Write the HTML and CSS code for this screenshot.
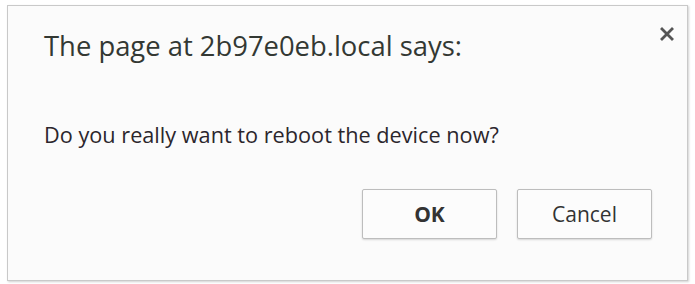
FILE: index.html
```html
<!DOCTYPE html>
<html>
<head>
<meta charset="utf-8">
<link rel="stylesheet" href="styles.css">
</head>
<body>
<div class="dialog">
  <div class="head">
    <h1 class="title">The page at 2b97e0eb.local says:</h1>
    <span class="close" aria-label="Close">
      <svg width="14" height="14" viewBox="0 0 14 14"><path d="M2 2 L12 12 M12 2 L2 12" stroke="#555555" stroke-width="2.8" stroke-linecap="square"/></svg>
    </span>
  </div>
  <p class="msg">Do you really want to reboot the device now?</p>
  <div class="actions">
    <button class="btn btn-ok">OK</button>
    <button class="btn">Cancel</button>
  </div>
</div>
</body>
</html>
```
FILE: styles.css
```css
html, body {
  margin: 0;
  padding: 0;
  background: #ffffff;
}
body {
  padding: 5px 7px 3px 7px;
  font-family: "Open Sans", "Noto Sans", sans-serif;
}
.dialog {
  box-sizing: border-box;
  height: 276px;
  background: #fbfbfb;
  border: 1px solid #c9c9c9;
  box-shadow: 1px 1px 2px rgba(0,0,0,0.18);
  padding: 0 35px 0 36px;
  display: flex;
  flex-direction: column;
}
.head {
  display: flex;
  justify-content: space-between;
  align-items: flex-start;
}
.title {
  margin: 22px 0 0 0;
  font-weight: 400;
  font-size: 27.4px;
  line-height: 36px;
  color: #333833;
}
.close {
  margin: 21px -22px 0 0;
  display: flex;
}
.msg {
  margin: 56px 0 0 0;
  font-size: 21.7px;
  line-height: 30px;
  color: #2b262c;
}
.actions {
  margin-top: 39px;
  display: flex;
  justify-content: flex-end;
  gap: 20px;
}
.btn {
  width: 135px;
  height: 50px;
  box-sizing: border-box;
  background: #fcfcfc;
  border: 1px solid #bdbdbd;
  border-radius: 2px;
  box-shadow: 0 1px 2px rgba(0,0,0,0.15);
  font-family: "Open Sans", "Noto Sans", sans-serif;
  font-size: 21px;
  color: #333;
  padding: 0;
}
.btn-ok {
  font-weight: 700;
}
```
